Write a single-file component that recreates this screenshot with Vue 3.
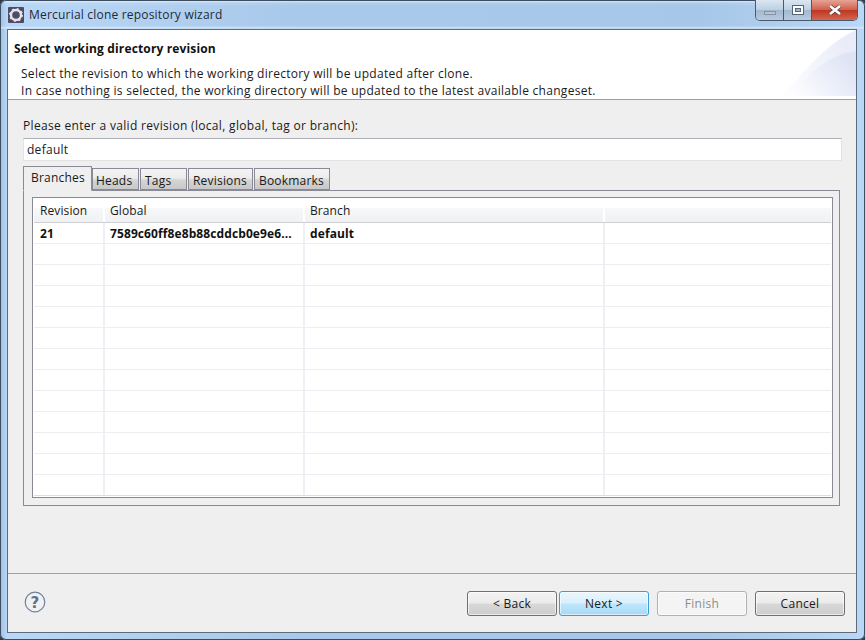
<script setup>
const tabs = [
  { label: 'Branches', w: 69, active: true },
  { label: 'Heads', w: 47 },
  { label: 'Tags', w: 47 },
  { label: 'Revisions', w: 65 },
  { label: 'Bookmarks', w: 76 },
]
const rows = Array.from({ length: 12 }, (_, i) => i)
</script>

<template>
  <div class="win">
    <div class="titlebar">
      <svg class="appicon" width="16" height="16" viewBox="0 0 16 16">
        <rect width="16" height="16" rx="1" fill="#4f4a68" />
        <circle cx="8" cy="8" r="5" fill="none" stroke="#e4e4e4" stroke-width="2.4" />
        <circle cx="8" cy="8" r="6.2" fill="none" stroke="#e4e4e4" stroke-width="1.6" stroke-dasharray="2 2.87" />
      </svg>
      <span class="wintitle">Mercurial clone repository wizard</span>
      <div class="controls">
        <div class="ctl min"><span class="minbar"></span></div>
        <div class="ctl max"><span class="maxbox"></span></div>
        <div class="ctl close">
          <svg width="14" height="10" viewBox="0 0 14 10"><path d="M2 1 L12 9 M12 1 L2 9" stroke="#5a3a36" stroke-width="4" /><path d="M2 1 L12 9 M12 1 L2 9" stroke="#fff" stroke-width="2.6" /></svg>
        </div>
      </div>
    </div>
    <div class="client">
      <div class="banner">
        <div class="bannertitle">Select working directory revision</div>
        <div class="bannerdesc">Select the revision to which the working directory will be updated after clone.<br />In case nothing is selected, the working directory will be updated to the latest available changeset.</div>
        <svg class="swoosh" width="75" height="66" viewBox="0 0 75 66">
          <defs>
            <linearGradient id="sw" x1="0" y1="1" x2="1" y2="0.4">
              <stop offset="0" stop-color="#fff" />
              <stop offset="1" stop-color="#dfe4f5" />
            </linearGradient>
          </defs>
          <path d="M0 66 C25 40 45 14 75 0 L75 66 Z" fill="url(#sw)" opacity="0.7" />
          <path d="M10 66 C30 40 50 24 75 21 L75 66 Z" fill="url(#sw)" />
        </svg>
      </div>
      <div class="body">
        <div class="label">Please enter a valid revision (local, global, tag or branch):</div>
        <div class="input">default</div>
        <div class="tabbar">
          <div v-for="t in tabs" :key="t.label" class="tab" :class="{ active: t.active }" :style="{ width: t.w + 'px' }">{{ t.label }}</div>
        </div>
        <div class="tabpanel">
          <div class="table">
            <div class="row head">
              <div class="c c1">Revision</div>
              <div class="c c2">Global</div>
              <div class="c c3">Branch</div>
              <div class="c c4"></div>
            </div>
            <div class="row data first">
              <div class="c c1">21</div>
              <div class="c c2">7589c60ff8e8b88cddcb0e9e6...</div>
              <div class="c c3">default</div>
              <div class="c c4"></div>
            </div>
            <div v-for="r in rows" :key="r" class="row data">
              <div class="c c1"></div>
              <div class="c c2"></div>
              <div class="c c3"></div>
              <div class="c c4"></div>
            </div>
          </div>
        </div>
      </div>
      <div class="footer">
        <svg class="help" width="22" height="22" viewBox="0 0 22 22">
          <circle cx="11" cy="11" r="9.8" fill="#f1f1f1" stroke="#6d7f9e" stroke-width="1.2" />
          <text x="11" y="16.5" text-anchor="middle" class="helpq">?</text>
        </svg>
        <div class="buttons">
          <div class="btn">&lt; Back</div>
          <div class="btn def">Next &gt;</div>
          <div class="btn dis">Finish</div>
          <div class="btn">Cancel</div>
        </div>
      </div>
    </div>
  </div>
</template>

<style>
html, body { margin: 0; background: #2c3a48; }
</style>

<style scoped>
.win {
  width: 865px;
  height: 640px;
  box-sizing: border-box;
  padding: 0 8px 7px 7px;
  display: flex;
  flex-direction: column;
  font-family: "Open Sans", sans-serif;
  font-size: 12px;
  letter-spacing: .28px;
  color: #1a1a1a;
  background:
    linear-gradient(180deg, transparent 1px, rgba(255,255,255,.55) 1px, rgba(255,255,255,.1) 3px, transparent 6px, transparent 26px, rgba(255,255,255,.5) 28px, transparent 29px) no-repeat 0 0 / 100% 29px,
    linear-gradient(90deg, #9fc0e4 0, #b9d7f6 7px, #a9c9ea 300px, #a7c7e8 700px, #b9d7f6 100%);
  border-radius: 6px;
  box-shadow: inset 0 0 0 1px #3d4d60;
}
.titlebar {
  height: 29px;
  flex: none;
  display: flex;
  align-items: flex-start;
  margin-right: -2px;
}
.appicon { margin: 7px 0 0 1px; }
.wintitle {
  margin: 8px 0 0 5px;
  letter-spacing: .2px;
  color: #1c2a3c;
  line-height: 14px;
}
.controls {
  margin-left: auto;
  display: flex;
  height: 20px;
  margin-right: 1px;
  border: 1px solid #4a5a6e;
  border-top: none;
  border-radius: 0 0 5px 5px;
  overflow: hidden;
}
.ctl { display: flex; align-items: center; justify-content: center; }
.min, .max {
  width: 27px;
  background: linear-gradient(180deg, #dbe6f1 0, #bdd0e3 48%, #a3b9cd 52%, #b6cbdf 100%);
  border-right: 1px solid #4a5a6e;
}
.close {
  width: 45px;
  background: linear-gradient(180deg, #e7a395 0, #d0614e 48%, #bd3722 52%, #d4664f 100%);
}
.minbar { width: 10px; height: 2px; background: #b8c4d0; border: 1px solid #8494a6; margin-top: 5px; }
.maxbox { width: 6px; height: 4px; border: 2px solid #fff; outline: 1px solid #55657a; background: #9fb6cc; box-shadow: inset 0 0 0 1px #55657a; }
.client {
  flex: 1;
  min-height: 0;
  background: #efefef;
  border: 1px solid #5f6b78;
  display: flex;
  flex-direction: column;
}
.banner {
  position: relative;
  flex: none;
  height: 69px;
  background: #fff;
  border-bottom: 1px solid #a0a0a0;
}
.bannertitle { font-weight: bold; letter-spacing: .15px; line-height: 14px; padding: 12px 0 0 6px; color: #111; }
.bannerdesc { line-height: 17px; padding: 9px 0 0 13px; }
.swoosh { position: absolute; right: 0; bottom: 3px; }
.body {
  flex: 1;
  min-height: 0;
  padding: 18px 16px 0 15px;
  display: flex;
  flex-direction: column;
}
.label { line-height: 14px; height: 19px; padding-top: 1px; letter-spacing: .32px; }
.input {
  height: 21px;
  line-height: 21px;
  background: #fff;
  border: 1px solid #e3e3e3;
  border-top-color: #b0b0b8;
  padding-left: 3px;
  margin-right: -2px;
}
.tabbar { display: flex; margin-top: 4px; height: 25px; align-items: flex-end; position: relative; z-index: 1; letter-spacing: .2px; }
.tab {
  box-sizing: border-box;
  height: 22px;
  line-height: 21px;
  padding: 1px 0 0 4px;
  border: 1px solid #8a8a96;
  background: linear-gradient(180deg, #f4f4f4 0, #ececec 45%, #d5d5d5 55%, #c8c8c8 100%);
  margin-right: 1px;
}
.tab:nth-child(2) { padding-left: 3px; }
.tab.active {
  height: 25px;
  background: #efefef;
  border-bottom-color: #efefef;
  padding: 0 0 0 7px;
  margin-bottom: -1px;
  margin-right: 0;
  line-height: 21px;
}
.tabpanel {
  box-sizing: border-box;
  height: 316px;
  border: 1px solid #8a8a96;
  padding: 6px 6px 7px 8px;
  background: #efefef;
}
.table {
  box-sizing: border-box;
  height: 301px;
  border: 1px solid #8a8a96;
  background: #fff;
  padding: 0 1px;
  letter-spacing: .1px;
}
.row {
  display: grid;
  grid-template-columns: 71px 200px 300px 1fr;
}
.row.head {
  height: 25px;
  background: linear-gradient(180deg, #fff 0, #fff 10px, #f7f8f9 10px, #f0f1f3 24px, #d0d0d4 24px);
}
.row.data { height: 21px; border-bottom: 1px solid #eeeef0; box-sizing: border-box; }
.row.first { font-weight: bold; color: #111; }
.row:last-child { border-bottom-color: #ddd; }
.c { padding-left: 5px; line-height: 21px; position: relative; white-space: nowrap; overflow: hidden; }
.c1 { padding-left: 6px; }
.row.head .c { padding-top: 2px; line-height: 21px; height: 24px; box-sizing: border-box; }
.row.data .c:not(.c4) { border-right: 2px solid #eef0f6; box-sizing: border-box; }
.row.head .c:not(.c4) { border-right: 2px solid #fff; box-sizing: border-box; }
.footer {
  box-sizing: border-box;
  flex: none;
  height: 59px;
  border-top: 1px solid #a0a0a0;
  display: flex;
  align-items: flex-start;
  padding: 17px 11px 0 16px;
}
.helpq { font-family: "DejaVu Sans", sans-serif; font-weight: bold; font-size: 15px; fill: #5f7090; }
.buttons { margin-left: auto; display: flex; }
.btn {
  box-sizing: border-box;
  width: 90px;
  height: 25px;
  line-height: 23px;
  text-align: center;
  border: 1px solid #707070;
  border-radius: 3px;
  background: linear-gradient(180deg, #f3f3f3 0, #ebebeb 48%, #d8d8d8 52%, #cdcdcd 100%);
  box-shadow: inset 0 0 0 1px rgba(255,255,255,.6);
  margin-left: 8px;
}
.btn:first-child { margin-left: 0; }
.btn.def {
  margin-left: 2px;
  border-color: #3c9fd4;
  background: linear-gradient(180deg, #eaf6fd 0, #d9f0fc 48%, #bee6fd 52%, #a7d9f5 100%);
}
.btn.dis {
  color: #8d8d8d;
  border-color: #adb2b5;
  background: #f4f4f4;
}
</style>
